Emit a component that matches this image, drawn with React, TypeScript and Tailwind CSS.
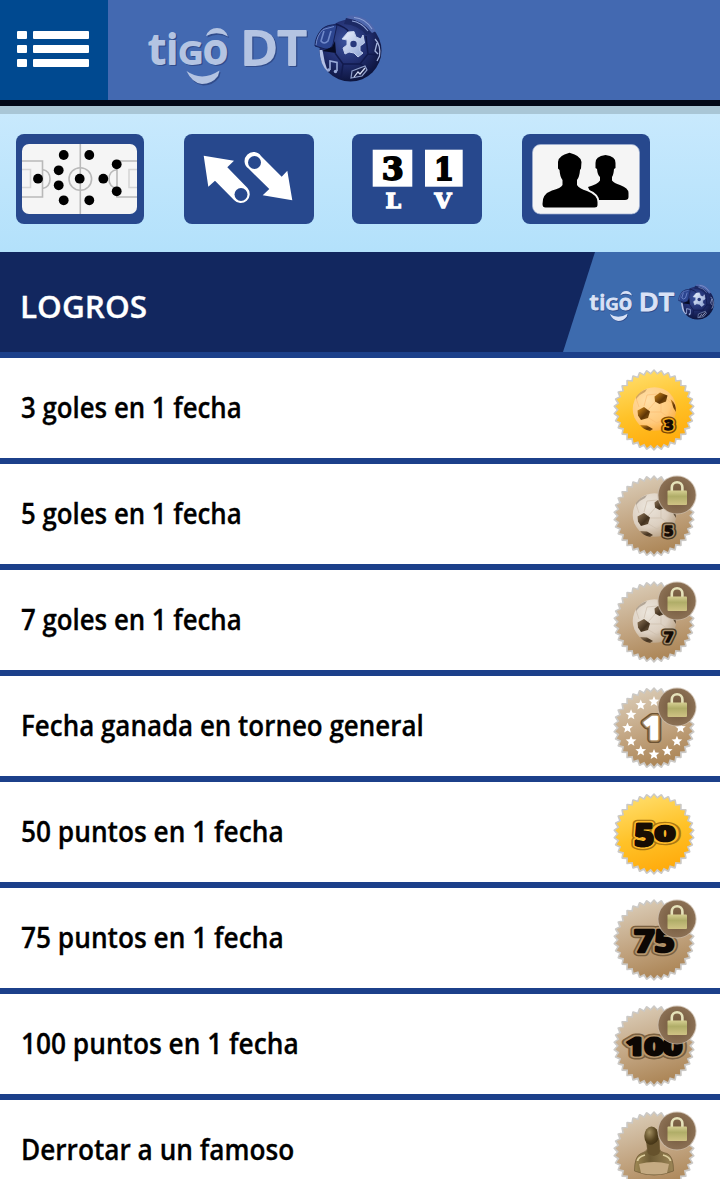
import React from 'react';

type BadgeKind = 'ball' | 'star' | 'points' | 'bust';

interface Achievement {
  label: string;
  kind: BadgeKind;
  value?: string;
  locked: boolean;
  scale: string;
}

const ACHIEVEMENTS: Achievement[] = [
  { label: '3 goles en 1 fecha', kind: 'ball', value: '3', locked: false, scale: 'scale-x-[0.922]' },
  { label: '5 goles en 1 fecha', kind: 'ball', value: '5', locked: true, scale: 'scale-x-[0.922]' },
  { label: '7 goles en 1 fecha', kind: 'ball', value: '7', locked: true, scale: 'scale-x-[0.922]' },
  { label: 'Fecha ganada en torneo general', kind: 'star', value: '1', locked: true, scale: 'scale-x-[0.927]' },
  { label: '50 puntos en 1 fecha', kind: 'points', value: '50', locked: false, scale: 'scale-x-[0.938]' },
  { label: '75 puntos en 1 fecha', kind: 'points', value: '75', locked: true, scale: 'scale-x-[0.938]' },
  { label: '100 puntos en 1 fecha', kind: 'points', value: '100', locked: true, scale: 'scale-x-[0.938]' },
  { label: 'Derrotar a un famoso', kind: 'bust', locked: true, scale: 'scale-x-[0.936]' },
];

const shape = (cx: number, cy: number, outer: number, inner: number, points: number) =>
  Array.from({ length: points * 2 }, (_, i) => {
    const r = i % 2 === 0 ? outer : inner;
    const a = (i * Math.PI) / points - Math.PI / 2;
    return `${(cx + r * Math.cos(a)).toFixed(2)},${(cy + r * Math.sin(a)).toFixed(2)}`;
  }).join(' ');

const SEAL_EDGE = shape(44, 47, 39.6, 36, 34);
const SEAL_FACE = shape(44, 46.8, 38.8, 35.2, 34);

const STARS = Array.from({ length: 12 }, (_, i) => {
  const a = (i * Math.PI) / 6;
  return shape(44 + 26.5 * Math.sin(a), 47 - 26.5 * Math.cos(a), 5.6, 2.5, 5);
});

function OutlinedNumber({ value, x, y, size, width, edge, halo, fill, ring = 2.6, weight = 1.8 }: {
  value: string; x: number; y: number; size: number; width: number;
  edge: string; halo: string; fill: string; ring?: number; weight?: number;
}) {
  const common = {
    x, y, fontSize: size, fontWeight: 700, fontFamily: '"Open Sans", sans-serif',
    textLength: width, lengthAdjust: 'spacingAndGlyphs', strokeLinejoin: 'round' as const,
  };
  return (
    <g>
      <text {...common} fill={edge} stroke={edge} strokeWidth={weight + ring * 2 + 2} aria-hidden="true">{value}</text>
      <text {...common} fill={halo} stroke={halo} strokeWidth={weight + ring * 2 - 0.8} aria-hidden="true">{value}</text>
      <text {...common} fill={fill} stroke={fill} strokeWidth={weight}>{value}</text>
    </g>
  );
}

function SoccerBall({ locked }: { locked: boolean }) {
  const dark = locked ? 'url(#patchGray)' : 'url(#patchGold)';
  return (
    <g>
      <circle cx="44.5" cy="46" r="21.8" fill={locked ? 'url(#ballGray)' : 'url(#ballGold)'} />
      <path
        d="M38 47 L46 38 M37 54 L47 60 M29 44 L26 35 M34 43 L37 32 L47 31 M57 36 L61 40 M47 60 L58 54 L62 44 M51 39 L51 49 L58 54 M40 49 L51 49"
        fill="none" stroke={locked ? '#cdbfad' : '#fbbd74'} strokeWidth="0.7"
      />
      <g fill={dark}>
        <path d="M44.500 33.500 L50 29.500 L57.500 32.500 L56 38.500 L49.500 41 L45 38.500Z" />
        <path d="M27.500 47.500 L34 44 L40 48.500 L38 55 L31 57 L28 52.500Z" />
        <path d="M30 62 L37 62.500 L43 66 L40 68 Q33 66.500 30 62Z" />
        <path d="M60.500 36 Q66.500 41 66 49 L63.500 45Z" />
        <path d="M26 34 Q30 28 37 26 L35 29 Q30 31 26 36Z" opacity=".35" />
      </g>
    </g>
  );
}

function Badge({ item }: { item: Achievement }) {
  const { kind, value = '', locked } = item;
  const edge = locked ? '#7a6040' : '#ab7712';
  const halo = locked ? '#b5966d' : '#ffbb2a';
  return (
    <svg className="h-[90px] w-[90px] shrink-0" viewBox="0 0 90 90">
      <polygon points={SEAL_EDGE} fill="#c9c7c3" stroke="#cbc9c6" strokeWidth="2.2" strokeLinejoin="round" />
      <polygon points={SEAL_FACE} fill={locked ? 'url(#tan)' : 'url(#gold)'} strokeLinejoin="round" />
      {kind === 'ball' && (
        <>
          <SoccerBall locked={locked} />
          <OutlinedNumber value={value} x={54.3} y={66.5} size={14.5} width={9} ring={1.9} weight={1.3} edge={locked ? '#4a3923' : '#7c4a05'} halo={locked ? '#a98f6d' : '#f5a91b'} fill="#130a04" />
        </>
      )}
      {kind === 'star' && (
        <>
          {STARS.map((p) => <polygon key={p} points={p} fill="#fff" />)}
          <OutlinedNumber value={value} x={33} y={58} size={30} width={19} edge="#6b5233" halo="#a9875b" fill="#fff" ring={1.8} weight={2.6} />
        </>
      )}
      {kind === 'points' && value === '50' && (
        <>
          <OutlinedNumber value="5" x={24.5} y={58.5} size={30} width={19.5} weight={2.6} ring={2} edge={edge} halo={halo} fill="#180d03" />
          <OutlinedNumber value="0" x={45} y={53.5} size={21} width={20} weight={2.6} ring={2} edge={edge} halo={halo} fill="#180d03" />
          <text x={24.5} y={58.5} fontSize={30} fontWeight={700} fontFamily='"Open Sans", sans-serif' textLength={19.5} lengthAdjust="spacingAndGlyphs" fill="#180d03" stroke="#180d03" strokeWidth="2.6" strokeLinejoin="round" aria-hidden="true">5</text>
        </>
      )}
      {kind === 'points' && value === '75' && (
        <OutlinedNumber value={value} x={24.5} y={58.5} size={30} width={40} weight={2.6} ring={2} edge={edge} halo={halo} fill="#0c0704" />
      )}
      {kind === 'points' && value === '100' && (
        <OutlinedNumber value={value} x={16} y={56} size={23} width={56} weight={2.8} ring={2} edge={edge} halo={halo} fill="#0c0704" />
      )}
      {kind === 'bust' && (
        <g>
          <path d="M36.500 37 L37.500 44 Q36 47 31 48.500 Q24.500 51 24.500 66 Q44 74 63.500 66 Q63.500 51 57 48.500 Q50 47 49.500 44 L49 33Z" fill="url(#bronze)" stroke="#75603b" strokeWidth=".8" />
          <ellipse cx="41.5" cy="31" rx="7.2" ry="9.5" fill="url(#bronzeHead)" />
          <path d="M37 39 Q43 42 49 34 L49.500 44 Q52 49 44 51 Q36 50 37.500 44Z" fill="#66522c" />
          <path d="M29 59 Q44 55 59 59 L57 68 Q44 71 31 68Z" fill="#c5ab83" />
          <path d="M27.500 56 Q28 52 35 50 M53 50 Q60 52 60.500 56" fill="none" stroke="#ddcf9f" strokeWidth="1.8" />
        </g>
      )}
      {locked && (
        <g>
          <circle cx="67" cy="26" r="19.6" fill="#c9bcab" opacity=".8" />
          <circle cx="67" cy="26" r="18.6" fill="url(#lockDisc)" />
          <path d="M61.800 22.500 V18.500 a5.300 5.300 0 0 1 10.600 0 V22.500" fill="none" stroke="#e5e2ba" strokeWidth="2.6" />
          <rect x="57.5" y="21.500" width="19.5" height="14.500" rx="1" fill="url(#lockBody)" />
        </g>
      )}
    </svg>
  );
}

function SharedDefs() {
  return (
    <svg className="absolute h-0 w-0" aria-hidden="true">
      <defs>
        <linearGradient id="gold" x1=".35" y1="0" x2=".65" y2="1">
          <stop offset="0" stopColor="#ffdc68" /><stop offset=".5" stopColor="#ffc228" /><stop offset="1" stopColor="#ffa90a" />
        </linearGradient>
        <linearGradient id="tan" x1=".35" y1="0" x2=".65" y2="1">
          <stop offset="0" stopColor="#d9cab4" /><stop offset=".5" stopColor="#c3a683" /><stop offset="1" stopColor="#aa8353" />
        </linearGradient>
        <radialGradient id="ballGold" cx=".35" cy=".3" r=".8">
          <stop offset="0" stopColor="#ffdfa8" /><stop offset=".65" stopColor="#ffca7c" /><stop offset="1" stopColor="#fbab3a" />
        </radialGradient>
        <radialGradient id="ballGray" cx=".35" cy=".3" r=".8">
          <stop offset="0" stopColor="#ece6dd" /><stop offset=".6" stopColor="#dccfc0" /><stop offset="1" stopColor="#b49c7e" />
        </radialGradient>
        <linearGradient id="patchGold" x1="0" y1="0" x2="1" y2="1">
          <stop offset="0" stopColor="#d98f1c" /><stop offset=".6" stopColor="#5e3506" /><stop offset="1" stopColor="#8d5a0e" />
        </linearGradient>
        <linearGradient id="patchGray" x1="0" y1="0" x2="1" y2="1">
          <stop offset="0" stopColor="#92795c" /><stop offset=".6" stopColor="#43321f" /><stop offset="1" stopColor="#6d573d" />
        </linearGradient>
        <linearGradient id="bronze" x1="0" y1="0" x2="1" y2="0">
          <stop offset="0" stopColor="#a08a55" /><stop offset=".4" stopColor="#6d5b34" /><stop offset="1" stopColor="#9c8657" />
        </linearGradient>
        <radialGradient id="bronzeHead" cx=".35" cy=".3" r=".8">
          <stop offset="0" stopColor="#a39062" /><stop offset=".6" stopColor="#55431f" /><stop offset="1" stopColor="#3b2c12" />
        </radialGradient>
        <radialGradient id="lockDisc">
          <stop offset="0" stopColor="#6f5539" /><stop offset="1" stopColor="#8b7054" />
        </radialGradient>
        <linearGradient id="lockBody" x1="0" y1="0" x2="0" y2="1">
          <stop offset="0" stopColor="#d5cf92" /><stop offset=".4" stopColor="#b0ad68" /><stop offset="1" stopColor="#cfc384" />
        </linearGradient>
        <radialGradient id="navyBall" cx=".42" cy=".35" r=".65">
          <stop offset="0" stopColor="#3a519b" /><stop offset=".55" stopColor="#222f70" /><stop offset="1" stopColor="#0d153f" />
        </radialGradient>
        <linearGradient id="silver" x1="0" y1="0" x2="1" y2="1">
          <stop offset="0" stopColor="#eef3ff" /><stop offset="1" stopColor="#8ba1d3" />
        </linearGradient>
      </defs>
    </svg>
  );
}

function Letters({ color }: { color: string }) {
  const round = { fill: color, stroke: color, strokeWidth: 1.8, strokeLinejoin: 'round' as const, fontFamily: '"Open Sans", sans-serif' };
  return (
    <g>
      <text {...round} fontSize="41" fontWeight="600" y="64">
        <tspan x="8.5" textLength="17" lengthAdjust="spacingAndGlyphs">t</tspan>
        <tspan x="26.5">i</tspan>
      </text>
      <text {...round} x="38.5" y="63.5" fontSize="31" fontWeight="600" textLength="24.500" lengthAdjust="spacingAndGlyphs">G</text>
      <text {...round} x="63" y="64" fontSize="41" fontWeight="600">o</text>
      <path d="M66 36 Q69 28 77 28 Q85 28 88 36.500 Q77 30.500 66 36Z" fill={color} />
      <path d="M46.500 71 Q62 82 79.500 70.500 L78 76 Q72 84 62 84 Q52 83 46.500 71Z" fill={color} />
      <text {...round} strokeWidth="1.8" x="100.5" y="65" fontSize="47" fontWeight="600" textLength="66" lengthAdjust="spacingAndGlyphs">DT</text>
    </g>
  );
}

function TigoLogo({ className, bright = false }: { className: string; bright?: boolean }) {
  return (
    <svg className={className} viewBox="0 0 244 100">
      <g transform="translate(1.2 1.4)" aria-hidden="true"><Letters color="#314c8b" /></g>
      <Letters color={bright ? '#d9e2f6' : '#b4c4e2'} />
      <circle cx="210.500" cy="50.500" r="31" fill="url(#navyBall)" />
      <path d="M179.500 50 Q180 65 188 72 Q184 62 182.500 50Z" fill="#b4c1e5" />
      <path d="M207 16 Q226 13 236 31 L232 33 Q222 20 208 19Z" fill="#4f68ae" />
      <path d="M206 18 Q222 20 231 33 L226 35 Q219 25 204 24Z" fill="#1c2964" />
      <path d="M214 17.500 Q225 18 232 29 M212 21 Q221 22 228 31" fill="none" stroke="#8ea2d6" strokeWidth="1.1" />
      <path d="M182 29 Q188 24 197 25 L193 44 Q191 50 185 49 L175 46 Q175 37 182 29Z" fill="#2c4590" stroke="#152055" strokeWidth="1" />
      <path d="M176 45 Q177 35 183 29.500 L194 26.500" fill="none" stroke="#6f88c8" strokeWidth="1" />
      <path d="M184 31 L181 41 Q184 45 188 41 L191 31" fill="none" stroke="#7089ca" strokeWidth="1.6" />
      <path d="M182 51 L192 47 L195 41 L196 53Z" fill="#070b24" />
      <path d="M196 24 Q207 28 209 32 M195 53 L203 64 L220 64 L228 54 L226 36 M203 64 L201 78 M220 64 L230 70 M228 54 L240 55" fill="none" stroke="#111a4d" strokeWidth="1.5" />
      <polygon points="208,32 214,31.5 216,37 221,39 223,35 224.500,43 220,46 220,51 223,53 218,57 214,53 209,52 205,54 203,48 207,45 207,40 202,39" fill="url(#silver)" stroke="#c3cfec" strokeWidth="1" strokeLinejoin="round" />
      <circle cx="213.500" cy="44" r="3.200" fill="#27377c" />
      <path d="M190 70 V61 L197 62.500 V71" fill="none" stroke="#9aabd9" strokeWidth="1.6" />
      <circle cx="188.500" cy="70" r="1.700" fill="#9aabd9" /><circle cx="195.500" cy="71.500" r="1.700" fill="#9aabd9" />
      <path d="M212 71 L225 66 L227 70 L222 76 L211 78Z" fill="#18204c" stroke="#8f9fca" strokeWidth="1.2" />
      <path d="M214 77 L218 72 L220 74 L225 68" fill="none" stroke="#d6def5" strokeWidth="1.2" />
      <path d="M235 39 Q241 45 239.500 56 L237 61 M237 43 L235 51 L238 54" fill="none" stroke="#a4b3dc" strokeWidth="1.3" />
    </svg>
  );
}

const DOTS = [
  [47.7, 21], [73.3, 21], [100.7, 30.3], [42.7, 36.3], [22, 44.7], [63.7, 44.7],
  [87.3, 44.7], [42.7, 51.3], [100.7, 57.3], [47.7, 66.3], [73.3, 66.3],
];

function PitchIcon() {
  return (
    <svg className="h-[90px] w-32" viewBox="0 0 128 90">
      <rect x="6" y="10" width="115" height="70" rx="7" fill="#f5f5f5" />
      <g fill="none" stroke="#b9b9b9" strokeWidth="1.6">
        <path d="M64.300 10 V80 M6 27 H26.500 V63 H6 M121 27 H101 V63 H121 M26.500 35.500 Q34 37 34 45 Q34 53 26.500 54.500 M101 35.500 Q93 37 93 45 Q93 53 101 54.500" />
        <path d="M6 35.500 H14.500 V53.500 H6 M121 35.500 H113 V53.500 H121" stroke="#d6d6d6" />
        <circle cx="64.300" cy="45" r="11.300" />
      </g>
      {DOTS.map(([x, y]) => <circle key={`${x}-${y}`} cx={x} cy={y} r="4.900" fill="#000" />)}
    </svg>
  );
}

function ArrowsIcon() {
  return (
    <svg className="h-[90px] w-[130px]" viewBox="0 0 130 90">
      <path d="M19.700 21.700 L50 26.700 L43.300 33.300 L63.500 54 A9 9 0 1 1 50 66 L31 46.700 L24.300 52.700Z" fill="#fff" />
      <circle cx="57" cy="60.500" r="6.500" fill="#27488d" />
      <path d="M108.300 66.300 L78.700 61.300 L85.300 55 L64.500 34.500 A9 9 0 1 1 77 22 L97.700 42.700 L103.300 36.700Z" fill="#fff" />
      <circle cx="70.500" cy="28.500" r="6.500" fill="#27488d" />
    </svg>
  );
}

function ScoreIcon() {
  const slab = { fontFamily: '"DejaVu Serif", serif', fontWeight: 700, lengthAdjust: 'spacingAndGlyphs' };
  return (
    <svg className="h-[90px] w-[130px]" viewBox="0 0 130 90">
      <rect x="20.700" y="15.700" width="39.600" height="37" fill="#fff" />
      <rect x="73" y="15.700" width="37.700" height="37" fill="#fff" />
      <text {...slab} x="29.800" y="45.800" fontSize="32" textLength="22" stroke="#000" strokeWidth="1.800">3</text>
      <text {...slab} x="82" y="46" fontSize="32" textLength="20" stroke="#000" strokeWidth="1.800">1</text>
      <text {...slab} x="33.500" y="73.500" fontSize="20" textLength="15.500" fill="#fff" stroke="#fff" strokeWidth="1.300">L</text>
      <text {...slab} x="82.500" y="73.500" fontSize="20" textLength="17" fill="#fff" stroke="#fff" strokeWidth="1.300">V</text>
    </svg>
  );
}

function PeopleIcon() {
  return (
    <svg className="h-[90px] w-32" viewBox="0 0 128 90">
      <rect x="10.500" y="10.500" width="107" height="69.500" rx="8" fill="#f5f5f5" stroke="#9fb0d3" strokeWidth=".7" />
      <path d="M73.500 29 Q73 22.500 83.500 21 Q94 22.500 93.500 29 L93.500 34 L92 35 Q91.500 41 90 43 V46.500 Q92 49 98 51 Q106.500 54 106.500 59 V63 Q106.500 66 103 66 H72 L66 53 Q76 50 78 46.500 V43 Q75.500 41 75 35 L73.500 34Z" />
      <path d="M36 28 Q36 21.500 47.500 18.700 Q59 21.500 59.500 28 L59 34.500 L58 36 Q57.500 43 55 46 V51 Q57 54.500 65 57 Q75.500 61 75.500 68 V71 Q75.500 73.500 72.500 73.500 H23.500 Q20.500 73.500 20.500 70 Q20 60 30 56.500 Q39 54 40.500 51 V46 Q38 43 37.500 36 L36 34.500Z" stroke="#f5f5f5" strokeWidth="4" paintOrder="stroke" />
    </svg>
  );
}

export default function App() {
  return (
    <div className="h-[1179px] w-[720px] overflow-hidden bg-white font-['Open_Sans',sans-serif]">
      <SharedDefs />
      <header className="flex h-[106px] border-b-[6px] border-[#010818] bg-[#4369b1]">
        <button className="flex w-[108px] flex-col gap-1.5 bg-[#004990] pt-[31px] pl-[17px]" aria-label="Menu">
          {[0, 1, 2].map((n) => (
            <span key={n} className="flex gap-1.5">
              <span className="h-2 w-2.5 rounded-[1px] bg-white" />
              <span className="h-2 w-14 rounded-[1px] bg-white" />
            </span>
          ))}
        </button>
        <TigoLogo className="ml-8 h-[100px] w-[244px]" />
      </header>

      <nav className="flex h-[146px] items-start border-t-8 border-[#a9c6d6] bg-linear-to-b from-[#c8e9fd] to-[#b3e1fb] pt-5 pl-4">
        <a className="mr-10 rounded-lg bg-[#27488d]"><PitchIcon /></a>
        <a className="mr-[38px] rounded-lg bg-[#27488d]"><ArrowsIcon /></a>
        <a className="mr-10 rounded-lg bg-[#27488d]"><ScoreIcon /></a>
        <a className="rounded-lg bg-[#27488d]"><PeopleIcon /></a>
      </nav>

      <section className="flex h-[106px] items-stretch justify-between border-b-[6px] border-[#1c408a] bg-[#12275f] pl-5">
        <h1 className="origin-left scale-x-[1.05] pt-[34px] text-[30px] leading-[42px] font-semibold text-white [-webkit-text-stroke:0.3px_white]">LOGROS</h1>
        <div className="flex w-[157px] items-center justify-end bg-[#3d6bae] pt-0.5 pr-[5px] [clip-path:polygon(32px_0,100%_0,100%_100%,0_100%)]">
          <TigoLogo bright className="h-[53.500px] w-[130.500px]" />
        </div>
      </section>

      <ul>
        {ACHIEVEMENTS.map((item) => (
          <li key={item.label} className="flex h-[106px] items-center justify-between border-b-[6px] border-[#1c408a] pr-5 pl-[21px]">
            <span className={`origin-left pb-0.5 text-[28px] leading-10 font-semibold whitespace-nowrap text-black [-webkit-text-stroke:0.3px_black] ${item.scale}`}>{item.label}</span>
            <Badge item={item} />
          </li>
        ))}
      </ul>
    </div>
  );
}
